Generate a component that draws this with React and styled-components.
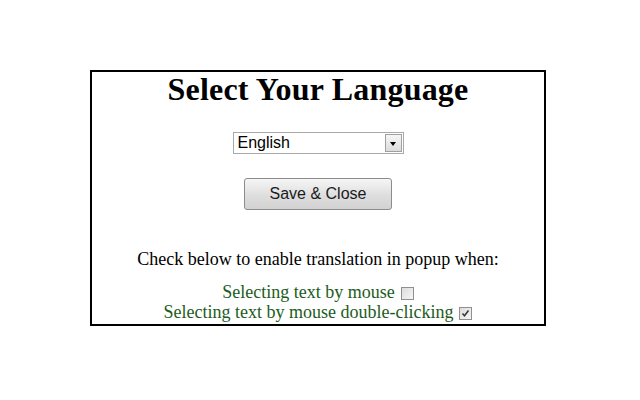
import React from 'react';
import styled, { createGlobalStyle } from 'styled-components';

const GlobalStyle = createGlobalStyle`
  html, body {
    margin: 0;
    padding: 0;
    background: #ffffff;
  }
`;

const Page = styled.div`
  width: 640px;
  height: 400px;
  padding: 70px 0 0 90px;
  box-sizing: border-box;
`;

const Panel = styled.div`
  width: 456px;
  height: 256px;
  box-sizing: border-box;
  border: 2px solid #000;
  display: flex;
  flex-direction: column;
  align-items: center;
  font-family: "Liberation Serif", "Times New Roman", serif;
`;

const Title = styled.h1`
  margin: 0;
  font-size: 32px;
  line-height: 35px;
  font-weight: bold;
  letter-spacing: 0.2px;
  color: #000;
`;

const SelectBox = styled.div`
  margin-top: 25px;
  width: 171px;
  height: 22px;
  box-sizing: border-box;
  border: 1px solid #a9a9a9;
  display: flex;
  align-items: stretch;
  background: #fff;
  font-family: "Liberation Sans", Arial, sans-serif;
  font-size: 16px;
  color: #000;
`;

const SelectValue = styled.span`
  flex: 1;
  padding-left: 4px;
  line-height: 20px;
`;

const SelectArrow = styled.span`
  width: 17px;
  margin: 1px 1px 1px 0;
  box-sizing: border-box;
  border: 1px solid #a0a0a0;
  background: linear-gradient(#f6f6f6, #dcdcdc);
  display: flex;
  align-items: center;
  justify-content: center;

  &::after {
    content: "";
    border-left: 3.5px solid transparent;
    border-right: 3.5px solid transparent;
    border-top: 4px solid #000;
    margin-top: 1px;
  }
`;

const Button = styled.button`
  margin-top: 24px;
  width: 148px;
  height: 32px;
  box-sizing: border-box;
  border: 1px solid #8c8c8c;
  border-radius: 3px;
  background: linear-gradient(#f6f6f6, #dedede 55%, #d2d2d2);
  font-family: "Liberation Sans", Arial, sans-serif;
  font-size: 16px;
  color: #1a1a1a;
  padding: 0;
  cursor: pointer;
`;

const Note = styled.p`
  margin: 39px 0 0;
  font-size: 18px;
  line-height: 21px;
  color: #000;
`;

const Options = styled.div`
  margin-top: 12px;
  display: flex;
  flex-direction: column;
  align-items: center;
`;

const OptionRow = styled.label`
  display: flex;
  align-items: center;
  gap: 6px;
  height: 20px;
  font-size: 18px;
  line-height: 20px;
  color: #1c5c1c;
`;

const Box = styled.span`
  width: 13px;
  height: 13px;
  box-sizing: border-box;
  border: 1px solid #8f8f8f;
  background: linear-gradient(135deg, #dcdcdc, #f6f6f6);
  display: flex;
  align-items: center;
  justify-content: center;
  margin-top: 2px;
`;

const Check = ({ checked }) => (
  <Box>
    {checked && (
      <svg width="9" height="9" viewBox="0 0 9 9">
        <path d="M1.5 4.5 L3.5 6.8 L7.5 1.5" fill="none" stroke="#3a3a3a" strokeWidth="1.6" />
      </svg>
    )}
  </Box>
);

export default function App() {
  return (
    <Page>
      <GlobalStyle />
      <Panel>
        <Title>Select Your Language</Title>
        <SelectBox>
          <SelectValue>English</SelectValue>
          <SelectArrow />
        </SelectBox>
        <Button>Save &amp; Close</Button>
        <Note>Check below to enable translation in popup when:</Note>
        <Options>
          <OptionRow>
            Selecting text by mouse
            <Check />
          </OptionRow>
          <OptionRow>
            Selecting text by mouse double-clicking
            <Check checked />
          </OptionRow>
        </Options>
      </Panel>
    </Page>
  );
}
